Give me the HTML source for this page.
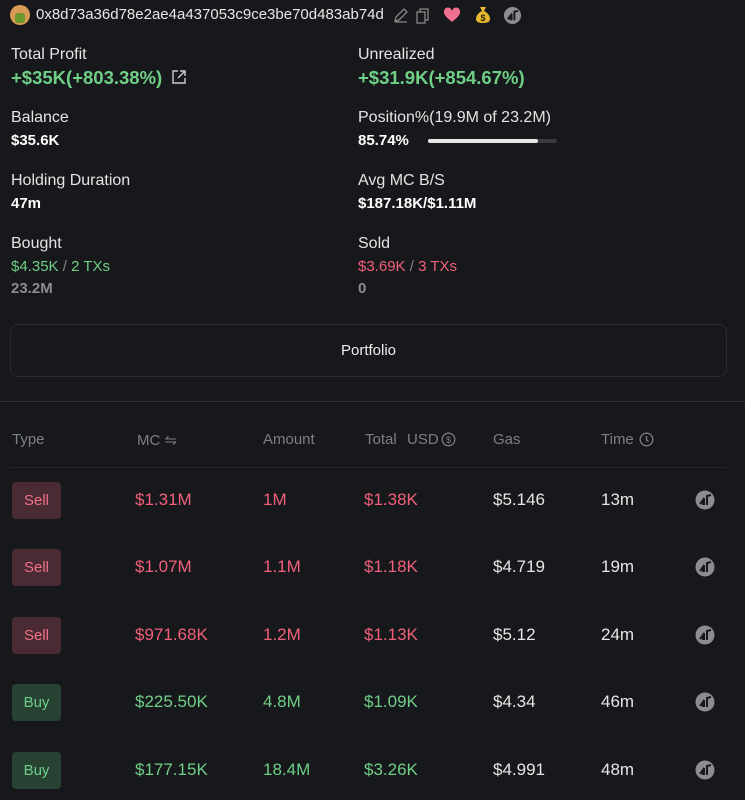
<!DOCTYPE html>
<html><head><style>
body{margin:0;background:#17181b;width:745px;height:800px;overflow:hidden;font-family:"Liberation Sans",sans-serif;color:#e6e6e6;position:relative}
.a{position:absolute;white-space:nowrap}
.lab{font-size:16px;color:#e4e4e4}
.val{font-size:15px;font-weight:bold;color:#fff}
.g{color:#6fcf86}.r{color:#f0607a}
.big{font-size:18.5px;font-weight:bold}
.hd{font-size:15px;color:#7d7f86;top:431px}
.cell{font-size:17px}
.btn{position:absolute;left:12px;width:49px;height:37px;border-radius:4px;font-size:15px;display:flex;align-items:center;justify-content:center}
.sell{background:#4a2a33;color:#f07088}
.buy{background:#274232;color:#6fcf86}
.ic{position:absolute;left:695px;width:20px;height:20px}
</style></head><body>
<div class="a" style="left:10px;top:5px;width:20px;height:20px;border-radius:50%;background:#d89a55"></div>
<div class="a" style="left:15px;top:13px;width:10px;height:10px;border-radius:3px;background:#6b9a2a"></div>
<div class="a" style="left:36px;top:6px;font-size:15px;color:#e8e8e8">0x8d73a36d78e2ae4a437053c9ce3be70d483ab74d</div>
<svg class="a" style="left:392px;top:7px" width="18" height="18" viewBox="0 0 18 18" fill="none" stroke="#888" stroke-width="1.3"><path d="M3 14l1-4 8-8 3 3-8 8z M3 15h12"/></svg>
<svg class="a" style="left:415px;top:7px" width="16" height="18" viewBox="0 0 16 18" fill="none" stroke="#888" stroke-width="1.3"><rect x="2" y="5" width="8" height="11"/><path d="M5 5V2h8v11h-3"/></svg>
<svg class="a" style="left:443px;top:7px" width="18" height="16" viewBox="0 0 18 16"><path d="M9 15C3 10 1 8 1 5a4 4 0 0 1 8-1 4 4 0 0 1 8 1c0 3-2 5-8 10z" fill="#f0708f"/></svg>
<svg class="a" style="left:475px;top:6px" width="16" height="18" viewBox="0 0 16 18"><path d="M5 1h6l-2 4c4 2 6 5 6 8 0 3-3 4-7 4s-7-1-7-4c0-3 2-6 6-8z" fill="#e8b830"/><text x="8" y="15" font-size="9" font-weight="bold" text-anchor="middle" fill="#3a2a00" font-family="Liberation Sans">$</text></svg>
<svg class="a" style="left:503px;top:6px" width="19" height="19" viewBox="0 0 20 20"><circle cx="10" cy="10" r="9" fill="#8b8d92"/><path d="M5 14l3-4v5M9 15V8M12 15V6l4-1" stroke="#17181b" stroke-width="2" fill="none"/></svg>

<div class="a lab" style="left:11px;top:46px">Total Profit</div>
<div class="a big g" style="left:11px;top:67px">+$35K(+803.38%)</div>
<svg class="a" style="left:171px;top:69px" width="16" height="16" viewBox="0 0 16 16" fill="none" stroke="#ccc" stroke-width="1.4"><path d="M7 2H2v12h12V9M9 2h5v5M14 2L7 9"/></svg>
<div class="a lab" style="left:358px;top:46px">Unrealized</div>
<div class="a big g" style="left:358px;top:67px">+$31.9K(+854.67%)</div>

<div class="a lab" style="left:11px;top:109px">Balance</div>
<div class="a val" style="left:11px;top:132px">$35.6K</div>
<div class="a lab" style="left:358px;top:109px">Position%(19.9M of 23.2M)</div>
<div class="a val" style="left:358px;top:132px">85.74%</div>
<div class="a" style="left:428px;top:139px;width:129px;height:4px;border-radius:2px;background:#3a3b40"><div style="width:110px;height:4px;border-radius:2px;background:#e6e6e6"></div></div>

<div class="a lab" style="left:11px;top:172px">Holding Duration</div>
<div class="a val" style="left:11px;top:195px">47m</div>
<div class="a lab" style="left:358px;top:172px">Avg MC B/S</div>
<div class="a val" style="left:358px;top:195px">$187.18K/$1.11M</div>

<div class="a lab" style="left:11px;top:235px">Bought</div>
<div class="a" style="left:11px;top:258px;font-size:15px"><span class="g">$4.35K</span> <span style="color:#888">/</span> <span class="g">2 TXs</span></div>
<div class="a" style="left:11px;top:280px;font-size:15px;font-weight:bold;color:#8a8c92">23.2M</div>
<div class="a lab" style="left:358px;top:235px">Sold</div>
<div class="a" style="left:358px;top:258px;font-size:15px"><span class="r">$3.69K</span> <span style="color:#888">/</span> <span class="r">3 TXs</span></div>
<div class="a" style="left:358px;top:280px;font-size:15px;font-weight:bold;color:#8a8c92">0</div>

<div class="a" style="left:10px;top:324px;width:715px;height:51px;border:1px solid #2a2b30;border-radius:8px;display:flex;align-items:center;justify-content:center;font-size:15px;color:#eee">Portfolio</div>
<div class="a" style="left:0;top:401px;width:745px;height:1px;background:#2e2f34"></div>

<div class="a hd" style="left:12px">Type</div>
<div class="a hd" style="left:137px">MC ⇋</div>
<div class="a hd" style="left:263px">Amount</div>
<div class="a hd" style="left:365px">Total</div>
<div class="a hd" style="left:407px">USD</div>
<svg class="a" style="left:441px;top:432px" width="15" height="15" viewBox="0 0 15 15"><circle cx="7.5" cy="7.5" r="6.3" fill="none" stroke="#7d7f86" stroke-width="1.3"/><text x="7.5" y="11" font-size="9" text-anchor="middle" fill="#7d7f86" font-family="Liberation Sans">$</text></svg>
<div class="a hd" style="left:493px">Gas</div>
<div class="a hd" style="left:601px">Time</div>
<svg class="a" style="left:639px;top:432px" width="15" height="15" viewBox="0 0 15 15" fill="none" stroke="#7d7f86" stroke-width="1.3"><circle cx="7.5" cy="7.5" r="6.3"/><path d="M7.5 4v4l2 1.5"/></svg>
<div class="a" style="left:10px;top:467px;width:716px;height:1px;background:#25262b"></div>

<div class="btn sell" style="top:482px">Sell</div>
<div class="a cell r" style="left:135px;top:490px">$1.31M</div><div class="a cell r" style="left:263px;top:490px">1M</div><div class="a cell r" style="left:364px;top:490px">$1.38K</div><div class="a cell" style="left:493px;top:490px">$5.146</div><div class="a cell" style="left:601px;top:490px">13m</div><svg class="ic" style="top:490px" viewBox="0 0 20 20"><circle cx="10" cy="10" r="9.5" fill="#8b8d92"/><path d="M5 14l3-4v5M9 15V8M12 15V6l4-1" stroke="#17181b" stroke-width="2" fill="none"/></svg>

<div class="btn sell" style="top:549px">Sell</div>
<div class="a cell r" style="left:135px;top:557px">$1.07M</div><div class="a cell r" style="left:263px;top:557px">1.1M</div><div class="a cell r" style="left:364px;top:557px">$1.18K</div><div class="a cell" style="left:493px;top:557px">$4.719</div><div class="a cell" style="left:601px;top:557px">19m</div><svg class="ic" style="top:557px" viewBox="0 0 20 20"><circle cx="10" cy="10" r="9.5" fill="#8b8d92"/><path d="M5 14l3-4v5M9 15V8M12 15V6l4-1" stroke="#17181b" stroke-width="2" fill="none"/></svg>

<div class="btn sell" style="top:617px">Sell</div>
<div class="a cell r" style="left:135px;top:625px">$971.68K</div><div class="a cell r" style="left:263px;top:625px">1.2M</div><div class="a cell r" style="left:364px;top:625px">$1.13K</div><div class="a cell" style="left:493px;top:625px">$5.12</div><div class="a cell" style="left:601px;top:625px">24m</div><svg class="ic" style="top:625px" viewBox="0 0 20 20"><circle cx="10" cy="10" r="9.5" fill="#8b8d92"/><path d="M5 14l3-4v5M9 15V8M12 15V6l4-1" stroke="#17181b" stroke-width="2" fill="none"/></svg>

<div class="btn buy" style="top:684px">Buy</div>
<div class="a cell g" style="left:135px;top:692px">$225.50K</div><div class="a cell g" style="left:263px;top:692px">4.8M</div><div class="a cell g" style="left:364px;top:692px">$1.09K</div><div class="a cell" style="left:493px;top:692px">$4.34</div><div class="a cell" style="left:601px;top:692px">46m</div><svg class="ic" style="top:692px" viewBox="0 0 20 20"><circle cx="10" cy="10" r="9.5" fill="#8b8d92"/><path d="M5 14l3-4v5M9 15V8M12 15V6l4-1" stroke="#17181b" stroke-width="2" fill="none"/></svg>

<div class="btn buy" style="top:752px">Buy</div>
<div class="a cell g" style="left:135px;top:760px">$177.15K</div><div class="a cell g" style="left:263px;top:760px">18.4M</div><div class="a cell g" style="left:364px;top:760px">$3.26K</div><div class="a cell" style="left:493px;top:760px">$4.991</div><div class="a cell" style="left:601px;top:760px">48m</div><svg class="ic" style="top:760px" viewBox="0 0 20 20"><circle cx="10" cy="10" r="9.5" fill="#8b8d92"/><path d="M5 14l3-4v5M9 15V8M12 15V6l4-1" stroke="#17181b" stroke-width="2" fill="none"/></svg>
</body></html>
